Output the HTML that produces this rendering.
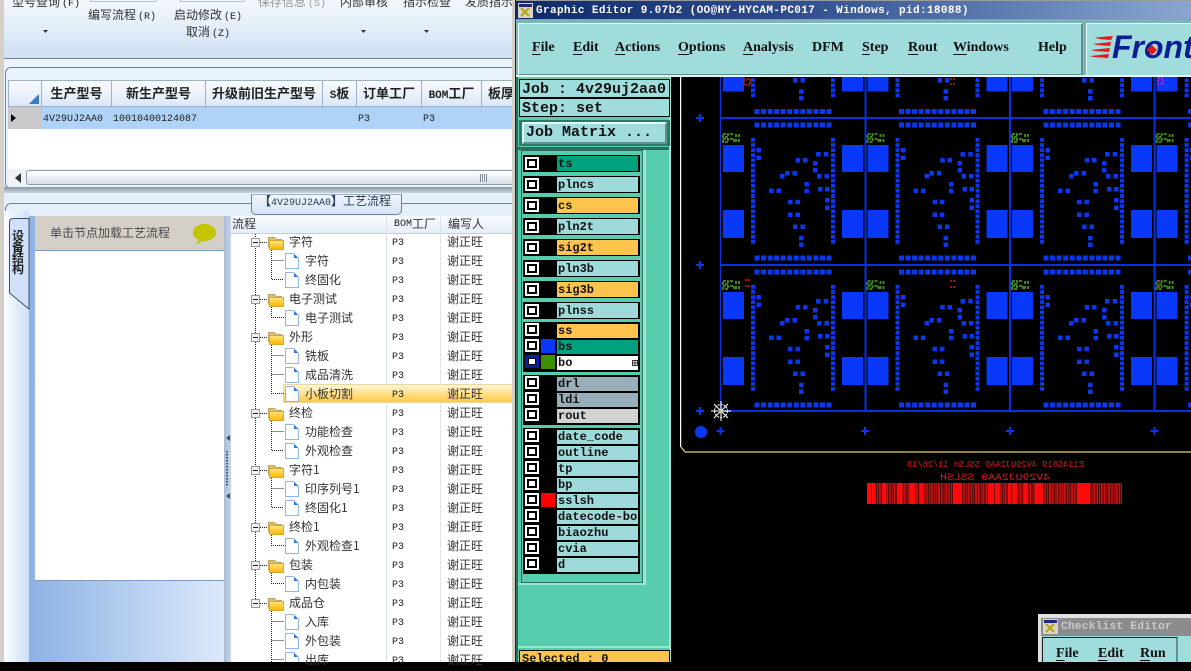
<!DOCTYPE html>
<html><head><meta charset="utf-8"><title>Graphic Editor</title>
<style>
html,body{margin:0;padding:0;width:1191px;height:662px;overflow:hidden;background:#000}
div,span,i{position:absolute;box-sizing:border-box}
body{font:12px "Liberation Mono","WenQuanYi Zen Hei","Noto Sans CJK SC",monospace;color:#222}
.t{white-space:nowrap}
.c{font-family:"WenQuanYi Zen Hei","Noto Sans CJK SC",sans-serif;font-size:12px;color:#333}
.m{font-family:"Liberation Mono",monospace;font-size:10px;color:#222}
.q{position:static;padding-left:2px}
.h{top:80px;height:26px;line-height:26px;text-align:center;font-weight:bold;font-size:13px;color:#222;font-family:"WenQuanYi Zen Hei","Noto Sans CJK SC",sans-serif;white-space:nowrap;border-right:1px solid #9fb0c4}
.h b{font:bold 11px "Liberation Mono",monospace}
.rw{left:232px;width:280px;height:19px;line-height:19px}
.rw span{top:0;white-space:nowrap}
.a{left:57px;font-family:"WenQuanYi Zen Hei","Noto Sans CJK SC",sans-serif;font-size:12px;color:#333}
.k{left:73px;font-family:"WenQuanYi Zen Hei","Noto Sans CJK SC",sans-serif;font-size:12px;color:#333}
.rw .p{left:160px;top:2px;font-family:"Liberation Mono",monospace;font-size:10px;color:#222}
.x{left:215px;font-family:"WenQuanYi Zen Hei","Noto Sans CJK SC",sans-serif;font-size:12px;color:#333}
.mn{top:39px;font:bold 14px/18px "Liberation Serif",serif;color:#111;white-space:nowrap;text-underline-offset:3px}
.r{left:523px;width:117px;height:17px;background:#000}
.r .b{left:2px;top:2px;width:14px;height:13px;background:#fff}
.r .b i{left:2px;top:2px;width:10px;height:9px;border:2px solid #000;background:#fff;display:block}
.r .s{left:18px;top:1px;width:14px;height:15px}
.r .n{left:34px;top:1px;width:81px;height:15px;background:#9fdada;font:bold 12px/16px "Liberation Mono",monospace;color:#111;padding-left:1px;white-space:nowrap}
.g{height:16px}
.g .b{top:1px}
.g .n{top:2px;height:14px;line-height:15px}
.g .s{top:1px;height:14px}
.o{background:#ffc44d!important}.e{background:#00a27e!important}
.ge{background:#98aeb8!important}
</style></head><body>

<!-- PCB canvas -->
<svg style="position:absolute;left:0;top:0" width="1191" height="662" viewBox="0 0 1191 662">
<defs>
<g id="c">
<path fill="#0a38f8" d="M2 27h21v27H2zM2 92h21v28H2zM121 27h21v27h-21zM121 92h21v28h-21z"/>
<g fill="none" stroke="#0a38f0">
<path stroke-width="5" stroke-dasharray="5 1.55" d="M33.5 7H112M33.5 140H112"/>
<path stroke-width="4" stroke-dasharray="3.8 1.3" d="M32 20V127M112 20V127"/>
<path stroke-width="4.5" stroke-linecap="square" d="M37.7 32.3h.01M37.7 39.7h.01M77 42.3h.01M84.3 42.3h.01M97.3 36.3h.01M105 36.3h.01M94.3 45.3h.01M94.3 52.3h.01M61.3 58.3h.01M66.3 55.3h.01M73.7 55.3h.01M98.3 58.3h.01M105.7 58.3h.01M85.7 66.3h.01M85.7 73h.01M50.3 72.7h.01M57.7 72.7h.01M99.3 71.3h.01M106.3 71.3h.01M106.3 82.3h.01M106.3 89.7h.01M69.3 84h.01M76.7 84h.01M69.3 96.7h.01M76.7 96.7h.01M74.3 108.7h.01M81.7 108.7h.01M80.3 120h.01M80.3 126.7h.01"/>
</g>
</g>
<path id="g" fill="none" stroke="#3f9412" stroke-width="1.8" stroke-dasharray="3 1" d="M2 18h5v3H2zM9 18h4M15 18v3M18 18v3M2 23h5v3H2zM9 23h4v3M15 23v3M18 23v3"/>
<path id="pl" fill="none" stroke="#0a36e6" stroke-width="2" d="M-4 0H4M0 -4V4"/>
</defs>
<rect width="1191" height="662" fill="#000"/>
<use href="#c" x="721" y="-28.5"/><use href="#c" x="865.5" y="-28.5"/><use href="#c" x="1010" y="-28.5"/><use href="#c" x="1154.6" y="-28.5"/>
<use href="#c" x="721" y="118"/><use href="#c" x="865.5" y="118"/><use href="#c" x="1010" y="118"/><use href="#c" x="1154.6" y="118"/>
<use href="#c" x="721" y="265"/><use href="#c" x="865.5" y="265"/><use href="#c" x="1010" y="265"/><use href="#c" x="1154.6" y="265"/>
<use href="#g" x="721" y="116"/><use href="#g" x="865.5" y="116"/><use href="#g" x="1010" y="116"/><use href="#g" x="1154.6" y="116"/>
<use href="#g" x="721" y="263"/><use href="#g" x="865.5" y="263"/><use href="#g" x="1010" y="263"/><use href="#g" x="1154.6" y="263"/>
<path fill="none" stroke="#0a30e0" stroke-width="2" d="M721 118H1191M721 265H1191M721 411H1191M865.5 77V411M1010 77V411M1154.6 77V411"/>
<path fill="none" stroke="#0a30e0" stroke-width="1.4" d="M720.5 77V411"/>
<path fill="none" stroke="#d01818" stroke-width="1.6" stroke-dasharray="2 1" d="M744 79h6v6h-6zM950 79h6M950 84h6M745 280h6M745 286h6M950 281h6M950 287h6"/>
<path fill="none" stroke="#c020c0" stroke-width="1.6" stroke-dasharray="2 1" d="M1158 78h5v6h-5zM1158 281h4M1158 287h4"/>
<use href="#pl" x="700" y="118"/><use href="#pl" x="700" y="265"/><use href="#pl" x="700" y="411"/>
<use href="#pl" x="720.5" y="431"/><use href="#pl" x="865" y="431"/><use href="#pl" x="1010" y="431"/><use href="#pl" x="1154.5" y="431"/>
<circle cx="701" cy="432" r="6" fill="#0a38f8"/>
<path fill="none" stroke="#fff" d="M680.5 77V447"/>
<path fill="none" stroke="#1a2ad0" d="M681.5 77V447"/>
<path fill="none" stroke="#e8d060" stroke-width="1.3" d="M681 447L685 452H1191"/>
<g stroke="#fff" fill="none" stroke-width="1.1">
<path d="M711 411H731M721 401V421M714 404L728 418M728 404L714 418"/>
<circle cx="721" cy="411" r="6.5" stroke-dasharray="2 1"/>
</g>
<circle cx="721" cy="411" r="1.4" fill="#e8d060"/>
<text transform="translate(1084,467) scale(-1,1)" font-family="Liberation Mono" font-size="9" fill="#d81818" textLength="177" lengthAdjust="spacingAndGlyphs">E114S819 4V29UJ2AA0 SSLSH 11/26/18</text>
<text transform="translate(1050,480) scale(-1,1)" font-family="Liberation Mono" font-size="10" fill="#d81818" textLength="110" lengthAdjust="spacingAndGlyphs">4V29UJ2AA0 SSLSH</text>
<rect x="867" y="483" width="255" height="21" fill="#4a0606"/>
<path fill="none" stroke="#c01414" stroke-width="21" stroke-dasharray="1.6 1 1 .8 2 1" d="M867 493.5H1122"/>
<path fill="#ff0a0a" d="M867 483h4v21h-4zM872 483h3v21h-3zM882 483h4v21h-4zM897 483h5v21h-5zM910 483h5v21h-5zM920 483h3v21h-3zM953 483h9v21h-9zM988 483h6v21h-6zM995 483h5v21h-5zM1008 483h3v21h-3zM1013 483h4v21h-4zM1024 483h3v21h-3zM1035 483h8v21h-8zM1077 483h13v21h-13z"/>
</svg>

<!-- left app -->
<div style="left:0;top:0;width:516px;height:662px;background:#fff"></div>
<div style="left:0;top:0;width:4px;height:662px;background:#d4d0c8"></div>
<div style="left:4px;top:0;width:508px;height:58px;background:linear-gradient(#f2f7fd,#e4eef9 45%,#cddff2)"></div>
<div style="left:90px;top:0;width:67px;height:2px;border:1px solid #b6c6d8;border-top:0"></div>
<div style="left:180px;top:0;width:65px;height:2px;border:1px solid #b6c6d8;border-top:0"></div>
<div class="t c" style="left:12px;top:-7px">型号查询<span class="m q">(F)</span></div>
<div class="t c" style="left:88px;top:6px">编写流程<span class="m q">(R)</span></div>
<div class="t c" style="left:174px;top:6px">启动修改<span class="m q">(E)</span></div>
<div class="t c" style="left:186px;top:23px">取消<span class="m q">(Z)</span></div>
<div class="t c" style="left:258px;top:-7px;color:#999">保存信息<span class="m q" style="color:#999">(S)</span></div>
<div class="t c" style="left:340px;top:-7px">内部审核</div>
<div class="t c" style="left:403px;top:-7px">指示检查</div>
<div class="t c" style="left:465px;top:-7px">发质指示</div>
<svg style="position:absolute;left:0;top:0" width="512" height="60"><path fill="#333" d="M43 30h5l-2.500 3zM361 30h5l-2.500 3zM424 30h5l-2.500 3z"/></svg>
<div style="left:4px;top:58px;width:508px;height:1px;background:#6f8296"></div>
<div style="left:4px;top:59px;width:508px;height:130px;background:#eaf3fc"></div>
<div style="left:5px;top:67px;width:520px;height:122px;border:1px solid #6f8296;border-radius:6px;background:#eaf3fc"></div>
<div style="left:8px;top:80px;width:504px;height:89px;background:#fff"></div>
<div style="left:8px;top:80px;width:504px;height:27px;background:linear-gradient(#fafcff,#dbe8f8);border:1px solid #9fb0c4;border-right:0"></div>
<div class="h" style="left:8px;width:34px"></div>
<svg style="position:absolute;left:28px;top:93px" width="12" height="12"><path fill="#3a78c8" d="M1 11L11 1V11z"/></svg>
<div class="h" style="left:42px;width:70px">生产型号</div>
<div class="h" style="left:112px;width:94px">新生产型号</div>
<div class="h" style="left:206px;width:117px">升级前旧生产型号</div>
<div class="h" style="left:323px;width:34px"><b>S</b>板</div>
<div class="h" style="left:357px;width:65px">订单工厂</div>
<div class="h" style="left:422px;width:60px"><b>BOM</b>工厂</div>
<div class="h" style="left:482px;width:30px;border:0;text-align:left;padding-left:6px">板厚</div>
<div style="left:8px;top:107px;width:504px;height:22px;background:#afd2f7"></div>
<div style="left:8px;top:107px;width:34px;height:22px;background:#c9c9cc"></div>
<svg style="position:absolute;left:10px;top:112px" width="8" height="12"><path fill="#000" d="M1 2l5 4-5 4z"/></svg>
<div class="t m" style="left:43px;top:114px">4V29UJ2AA0</div>
<div class="t m" style="left:113px;top:114px">10010400124087</div>
<div class="t m" style="left:358px;top:114px">P3</div>
<div class="t m" style="left:423px;top:114px">P3</div>
<div style="left:8px;top:169px;width:504px;height:16px;background:#eef3f9"></div>
<svg style="position:absolute;left:14px;top:172px" width="10" height="12"><path fill="#333" d="M7 1L1 6l6 5z"/></svg>
<div style="left:26px;top:170px;width:486px;height:15px;border:1px solid #8e9aa8;border-right:0;border-radius:3px 0 0 3px;background:linear-gradient(#fff,#d6dee8)"></div>
<div style="left:480px;top:174px;width:7px;height:8px;background:repeating-linear-gradient(90deg,#7a8490 0 1px,#fff 1px 2px)"></div>
<div style="left:4px;top:187px;width:508px;height:6px;background:linear-gradient(#8a99a8,#c8d4e2)"></div>
<div style="left:4px;top:193px;width:508px;height:23px;background:#e6f0fb"></div>
<div style="left:5px;top:203px;width:520px;height:8px;border-top:1px solid #6f8296;border-left:1px solid #6f8296;border-radius:6px 0 0 0"></div>
<div class="t" style="left:251px;top:194px;width:151px;height:21px;border:1px solid #6f8296;border-top:1px solid #9fb0c4;border-radius:0 0 5px 5px;background:linear-gradient(#eef5fd,#d6e4f5);line-height:12px;padding-left:7px;color:#2a3a55"><span class="m" style="position:static;color:#2a3a55;font-size:10px"><b style="font-size:12px;font-family:'WenQuanYi Zen Hei','Noto Sans CJK SC',sans-serif">【</b>4V29UJ2AA0<b style="font-size:12px;font-family:'WenQuanYi Zen Hei','Noto Sans CJK SC',sans-serif">】</b></span><span class="c" style="position:static;color:#2a3a55;font-size:12px">工艺流程</span></div>

<!-- left side panel -->
<div style="left:4px;top:211px;width:25px;height:451px;background:linear-gradient(90deg,#fbfdff,#cddff7)"></div>
<div style="left:29px;top:216px;width:196px;height:446px;background:linear-gradient(90deg,#8db2e4,#dce9fb)"></div>
<svg style="position:absolute;left:9px;top:218px" width="22" height="92"><path fill="#cfe0f8" stroke="#40506a" d="M20 .5H4Q.5 .5 .5 5V75L20 91z"/></svg>
<div class="t" style="left:12px;top:230px;width:14px;font:bold 12px/11px 'WenQuanYi Zen Hei','Noto Sans CJK SC',sans-serif;color:#222;white-space:normal;word-break:break-all">设备结构</div>
<div style="left:35px;top:216px;width:189px;height:35px;background:#d4d0c8;border-bottom:1px solid #7e9cc0"></div>
<div class="t c" style="left:50px;top:224px;font-size:12px;letter-spacing:0;color:#4a4a4a">单击节点加载工艺流程</div>
<svg style="position:absolute;left:192px;top:222px" width="26" height="24"><path fill="#c4c400" d="M12 2C5 2 1 6 1 10.500 1 14 4 17 7 18L3 23 11 19C18 19 24 16 24 10.500 24 6 19 2 12 2z"/></svg>
<div style="left:35px;top:251px;width:189px;height:330px;background:#fff;border-bottom:1px solid #7e9cc0"></div>
<div style="left:224px;top:216px;width:7px;height:446px;background:linear-gradient(90deg,#a8bcd4,#c8d6e6)"></div>
<svg style="position:absolute;left:224px;top:430px" width="7" height="80"><path fill="#3a5070" d="M6 5v6l-4-3zM6 63v6l-4-3z"/><path stroke="#3a5880" stroke-width="2" stroke-dasharray="1.500 1.500" d="M3 21V56"/></svg>

<!-- tree -->
<div style="left:231px;top:216px;width:281px;height:446px;background:#fff"></div>
<div style="left:231px;top:216px;width:281px;height:18px;background:linear-gradient(#f8fbff,#e6eef8);border-bottom:1px solid #c4d0de"></div>
<div style="left:386px;top:216px;width:1px;height:446px;background:#dfe4ea"></div>
<div style="left:440px;top:216px;width:1px;height:446px;background:#dfe4ea"></div>
<div class="t c" style="left:232px;top:215px">流程</div>
<div class="t m" style="left:394px;top:219px">BOM</div>
<div class="t c" style="left:412px;top:215px">工厂</div>
<div class="t c" style="left:448px;top:215px">编写人</div>
<div style="left:283px;top:384px;width:229px;height:19px;background:linear-gradient(#fff6d8,#ffe08a 50%,#ffc84a);border:1px solid #e8d8a0;border-right:0"></div>
<svg style="position:absolute;left:0;top:0" width="512" height="662">
<defs>
<linearGradient id="fg" x1="0" y1="0" x2="0" y2="1"><stop offset="0" stop-color="#ffe680"/><stop offset="1" stop-color="#ffb400"/></linearGradient>
<g id="f"><path fill="#d8c080" stroke="#c0a860" d="M.5 12V2.500h6l2 2h5V12z"/><path fill="url(#fg)" stroke="#d8a830" d="M1.500 14.500V5.500h14v9z"/></g>
<g id="d"><path fill="#fff" stroke="#8db8e8" d="M.5 .5h8l5 5v10H.5z"/><path fill="#2a78d8" d="M9 1l4 4H9z"/></g>
<g id="m"><rect x=".5" y=".5" width="8" height="8" fill="#f2f2f2" stroke="#999"/><path stroke="#222" d="M2 4.500h5"/></g>
</defs>
<g fill="none" stroke="#222" stroke-dasharray="1 1">
<path d="M255.500 234V600"/>
<path d="M260 242.500h7M260 299.500h7M260 337.500h7M260 413.500h7M260 470.500h7M260 527.500h7M260 565.500h7M260 603.500h7"/>
<path d="M271.500 250V279.500H284M271.500 260.500H284M271.500 307V317.500H284M271.500 345V393.500H284M271.500 355.500H284M271.500 374.500H284M271.500 421V450.500H284M271.500 431.500H284M271.500 478V507.500H284M271.500 488.500H284M271.500 535V545.500H284M271.500 573V583.500H284M271.500 611V662M271.500 621.500H284M271.500 640.500H284M271.500 659.500H284"/>
</g>
<use href="#m" x="251" y="238"/><use href="#m" x="251" y="295"/><use href="#m" x="251" y="333"/><use href="#m" x="251" y="409"/><use href="#m" x="251" y="466"/><use href="#m" x="251" y="523"/><use href="#m" x="251" y="561"/><use href="#m" x="251" y="599"/>
<use href="#f" x="268" y="235"/><use href="#f" x="268" y="292"/><use href="#f" x="268" y="330"/><use href="#f" x="268" y="406"/><use href="#f" x="268" y="463"/><use href="#f" x="268" y="520"/><use href="#f" x="268" y="558"/><use href="#f" x="268" y="596"/>
<use href="#d" x="285" y="253"/><use href="#d" x="285" y="272"/><use href="#d" x="285" y="310"/><use href="#d" x="285" y="348"/><use href="#d" x="285" y="367"/><use href="#d" x="285" y="386"/><use href="#d" x="285" y="424"/><use href="#d" x="285" y="443"/><use href="#d" x="285" y="481"/><use href="#d" x="285" y="500"/><use href="#d" x="285" y="538"/><use href="#d" x="285" y="576"/><use href="#d" x="285" y="614"/><use href="#d" x="285" y="633"/><use href="#d" x="285" y="652"/>
</svg>
<div class="rw" style="top:232px"><span class="a">字符</span><span class="p">P3</span><span class="x">谢正旺</span></div>
<div class="rw" style="top:251px"><span class="k">字符</span><span class="p">P3</span><span class="x">谢正旺</span></div>
<div class="rw" style="top:270px"><span class="k">终固化</span><span class="p">P3</span><span class="x">谢正旺</span></div>
<div class="rw" style="top:289px"><span class="a">电子测试</span><span class="p">P3</span><span class="x">谢正旺</span></div>
<div class="rw" style="top:308px"><span class="k">电子测试</span><span class="p">P3</span><span class="x">谢正旺</span></div>
<div class="rw" style="top:327px"><span class="a">外形</span><span class="p">P3</span><span class="x">谢正旺</span></div>
<div class="rw" style="top:346px"><span class="k">铣板</span><span class="p">P3</span><span class="x">谢正旺</span></div>
<div class="rw" style="top:365px"><span class="k">成品清洗</span><span class="p">P3</span><span class="x">谢正旺</span></div>
<div class="rw" style="top:384px"><span class="k">小板切割</span><span class="p">P3</span><span class="x">谢正旺</span></div>
<div class="rw" style="top:403px"><span class="a">终检</span><span class="p">P3</span><span class="x">谢正旺</span></div>
<div class="rw" style="top:422px"><span class="k">功能检查</span><span class="p">P3</span><span class="x">谢正旺</span></div>
<div class="rw" style="top:441px"><span class="k">外观检查</span><span class="p">P3</span><span class="x">谢正旺</span></div>
<div class="rw" style="top:460px"><span class="a">字符1</span><span class="p">P3</span><span class="x">谢正旺</span></div>
<div class="rw" style="top:479px"><span class="k">印序列号1</span><span class="p">P3</span><span class="x">谢正旺</span></div>
<div class="rw" style="top:498px"><span class="k">终固化1</span><span class="p">P3</span><span class="x">谢正旺</span></div>
<div class="rw" style="top:517px"><span class="a">终检1</span><span class="p">P3</span><span class="x">谢正旺</span></div>
<div class="rw" style="top:536px"><span class="k">外观检查1</span><span class="p">P3</span><span class="x">谢正旺</span></div>
<div class="rw" style="top:555px"><span class="a">包装</span><span class="p">P3</span><span class="x">谢正旺</span></div>
<div class="rw" style="top:574px"><span class="k">内包装</span><span class="p">P3</span><span class="x">谢正旺</span></div>
<div class="rw" style="top:593px"><span class="a">成品仓</span><span class="p">P3</span><span class="x">谢正旺</span></div>
<div class="rw" style="top:612px"><span class="k">入库</span><span class="p">P3</span><span class="x">谢正旺</span></div>
<div class="rw" style="top:631px"><span class="k">外包装</span><span class="p">P3</span><span class="x">谢正旺</span></div>
<div class="rw" style="top:650px"><span class="k">出库</span><span class="p">P3</span><span class="x">谢正旺</span></div>
<div style="left:512px;top:0;width:3px;height:662px;background:#d4d0c8"></div>
<div style="left:515px;top:0;width:1px;height:662px;background:#223"></div>

<!-- right app: title + menu -->
<div style="left:516px;top:0;width:675px;height:22px;background:#9a9aa0"></div>
<div style="left:516px;top:1px;width:675px;height:18px;background:linear-gradient(90deg,#0f2a68,#2e4c8c 40%,#8aa6d0)"></div>
<svg style="position:absolute;left:518px;top:3px" width="15" height="15"><rect width="15" height="15" fill="#d8d4c8"/><rect x="1" y="1" width="13" height="3" fill="#1a2a80"/><path stroke="#b8a810" stroke-width="2.200" d="M3 5l8 8M11 5l-8 8"/></svg>
<div class="t" style="left:536px;top:4px;font:bold 11px/14px 'Liberation Mono',monospace;letter-spacing:.38px;color:#fff">Graphic Editor 9.07b2 (OO@HY-HYCAM-PC017 - Windows, pid:18088)</div>
<div style="left:516px;top:20px;width:675px;height:57px;background:#7db4b4"></div>
<div style="left:518px;top:23px;width:565px;height:53px;background:#a0dcdc;border:1px solid #5a8c8c;border-top-color:#e4ffff;border-left-color:#e4ffff;border-bottom:2px solid #5f8f8f;border-right:2px solid #5f8f8f"></div>
<div style="left:1086px;top:23px;width:105px;height:53px;background:#a0dcdc;border-left:1px solid #e4ffff;border-top:1px solid #e4ffff"></div>
<div style="left:516px;top:75px;width:675px;height:2px;background:#e8f6f6"></div>
<div class="mn" style="left:532px"><u>F</u>ile</div>
<div class="mn" style="left:573px"><u>E</u>dit</div>
<div class="mn" style="left:615px"><u>A</u>ctions</div>
<div class="mn" style="left:678px"><u>O</u>ptions</div>
<div class="mn" style="left:743px"><u>A</u>nalysis</div>
<div class="mn" style="left:812px">DFM</div>
<div class="mn" style="left:862px"><u>S</u>tep</div>
<div class="mn" style="left:908px"><u>R</u>out</div>
<div class="mn" style="left:953px"><u>W</u>indows</div>
<div class="mn" style="left:1038px">Help</div>
<svg style="position:absolute;left:1090px;top:34px" width="24" height="26"><path fill="#e81818" d="M5 3.500L23 2 21 6 9 5zM3 10L21 8 20 12 7 11zM1 16L20 14 19 18 5 17zM0 22L19 20 18 24 3 23z"/></svg>
<div class="t" style="left:1112px;top:29px;font:italic bold 32px/36px 'Liberation Sans',sans-serif;color:#0c1e90">Front</div>
<svg style="position:absolute;left:1146px;top:44px" width="12" height="12"><path fill="#e81818" d="M6 1l5 5-5 5-5-5z"/></svg>

<!-- right app: side panel -->
<div style="left:516px;top:77px;width:155px;height:585px;background:#57cdae;border-right:2px solid #9ee6d2"></div>
<div style="left:516px;top:77px;width:2px;height:585px;background:#2b6a5c"></div>
<div style="left:518px;top:77px;width:151px;height:70px;background:#57cdae"></div>
<div class="t" style="left:519px;top:79px;width:151px;height:19px;border:1px solid #000;background:#a0dcdc;font:bold 15px/19px 'Liberation Mono',monospace;padding-left:2px;color:#111">Job : 4v29uj2aa0</div>
<div class="t" style="left:519px;top:98px;width:151px;height:19px;border:1px solid #000;background:#a0dcdc;font:bold 15px/19px 'Liberation Mono',monospace;padding-left:2px;color:#111">Step: set</div>
<div style="left:519px;top:120px;width:151px;height:26px;background:#2b7a68"></div>
<div class="t" style="left:522px;top:122px;width:145px;height:22px;background:#a0dcdc;border:2px solid;border-color:#e4ffff #5f8f8f #5f8f8f #e4ffff;font:bold 15px/17px 'Liberation Mono',monospace;padding-left:2px;color:#111">Job Matrix ...</div>
<div style="left:518px;top:147px;width:151px;height:3px;background:#2b6a5c"></div>
<div style="left:521px;top:150px;width:122px;height:433px;background:#57cdae;border:1px solid #2b6a5c"></div>
<div style="left:643px;top:150px;width:3px;height:434px;background:#9ee6d2"></div>
<div style="left:518px;top:583px;width:128px;height:2px;background:#9ee6d2"></div>
<div style="left:518px;top:646px;width:152px;height:2px;background:#9ee6d2"></div>

<div class="r" style="top:155px"><div class="b"><i></i></div><div class="n e">ts</div></div>
<div class="r" style="top:176px"><div class="b"><i></i></div><div class="n">plncs</div></div>
<div class="r" style="top:197px"><div class="b"><i></i></div><div class="n o">cs</div></div>
<div class="r" style="top:218px"><div class="b"><i></i></div><div class="n">pln2t</div></div>
<div class="r" style="top:239px"><div class="b"><i></i></div><div class="n o">sig2t</div></div>
<div class="r" style="top:260px"><div class="b"><i></i></div><div class="n">pln3b</div></div>
<div class="r" style="top:281px"><div class="b"><i></i></div><div class="n o">sig3b</div></div>
<div class="r" style="top:302px"><div class="b"><i></i></div><div class="n">plnss</div></div>

<div class="r g" style="top:322px"><div class="b"><i></i></div><div class="n o">ss</div></div>
<div class="r g" style="top:338px"><div class="b"><i></i></div><div class="s" style="background:#0a38f8"></div><div class="n e">bs</div></div>
<div class="r g" style="top:354px;height:18px"><div class="b" style="background:#0a1ea0"><i style="background:#fff;border-color:#000 ;left:3px;top:3px;width:8px;height:7px;border-width:1px"></i></div><div class="s" style="background:#3f9000"></div><div class="n" style="background:#fff">bo</div><svg style="position:absolute;left:109px;top:6px" width="6" height="6"><path fill="none" stroke="#333" d="M.5 .5h5v5h-5zM3 .5v5M.5 3h5"/></svg></div>

<div class="r g" style="top:375px"><div class="b"><i></i></div><div class="n ge">drl</div></div>
<div class="r g" style="top:391px"><div class="b"><i></i></div><div class="n ge">ldi</div></div>
<div class="r g" style="top:407px;height:18px"><div class="b"><i></i></div><div class="n" style="background:#d3d3d3">rout</div></div>

<div class="r g" style="top:428px"><div class="b"><i></i></div><div class="n">date_code</div></div>
<div class="r g" style="top:444px"><div class="b"><i></i></div><div class="n">outline</div></div>
<div class="r g" style="top:460px"><div class="b"><i></i></div><div class="n">tp</div></div>
<div class="r g" style="top:476px"><div class="b"><i></i></div><div class="n">bp</div></div>
<div class="r g" style="top:492px"><div class="b"><i></i></div><div class="s" style="background:#f00"></div><div class="n">sslsh</div></div>
<div class="r g" style="top:508px"><div class="b"><i></i></div><div class="n">datecode-bo</div></div>
<div class="r g" style="top:524px"><div class="b"><i></i></div><div class="n">biaozhu</div></div>
<div class="r g" style="top:540px"><div class="b"><i></i></div><div class="n">cvia</div></div>
<div class="r g" style="top:556px;height:18px"><div class="b"><i></i></div><div class="n">d</div></div>

<div class="t" style="left:519px;top:650px;width:151px;height:12px;background:#ffc44d;border:1px solid #000;border-bottom:0;font:bold 12px/16px 'Liberation Mono',monospace;padding-left:2px;color:#111">Selected : 0</div>

<!-- checklist editor -->
<div style="left:1038px;top:614px;width:153px;height:48px;background:#e0e0e0"></div>
<div style="left:1041px;top:618px;width:150px;height:18px;background:#8c8c8c"></div>
<svg style="position:absolute;left:1043px;top:619px" width="15" height="15"><rect width="15" height="15" fill="#d8d4c8"/><rect x="1" y="1" width="13" height="3" fill="#1a2a80"/><path stroke="#b8a810" stroke-width="2.200" d="M3 5l8 8M11 5l-8 8"/></svg>
<div class="t" style="left:1061px;top:620px;font:bold 11px/14px 'Liberation Mono',monospace;letter-spacing:.34px;color:#c8cccc">Checklist Editor</div>
<div style="left:1041px;top:636px;width:150px;height:26px;background:#a0dcdc"></div>
<div style="left:1042px;top:637px;width:136px;height:25px;border:1px solid #222;border-bottom:0;border-right:2px solid #5f8f8f;background:#a0dcdc"></div>
<div class="mn" style="left:1056px;top:645px"><u>F</u>ile</div>
<div class="mn" style="left:1098px;top:645px"><u>E</u>dit</div>
<div class="mn" style="left:1140px;top:645px"><u>R</u>un</div>
</body></html>
